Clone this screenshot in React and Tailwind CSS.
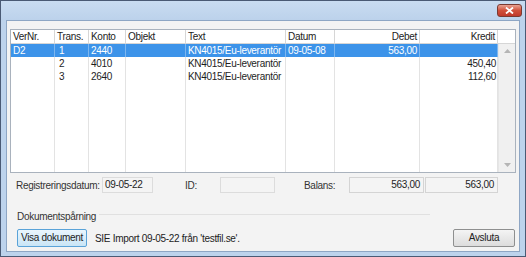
const cols = [
  { key: "ver", label: "VerNr.", w: "w-[44px]", align: "text-left" },
  { key: "trans", label: "Trans.", w: "w-[34px]", align: "text-left" },
  { key: "konto", label: "Konto", w: "w-[37px]", align: "text-left" },
  { key: "objekt", label: "Objekt", w: "w-[60px]", align: "text-left" },
  { key: "text", label: "Text", w: "w-[100px]", align: "text-left" },
  { key: "datum", label: "Datum", w: "w-[49px]", align: "text-left" },
  { key: "debet", label: "Debet", w: "w-[85px]", align: "text-right" },
  { key: "kredit", label: "Kredit", w: "w-[78px]", align: "text-right" },
];

const rows = [
  { ver: "D2", trans: "1", konto: "2440", objekt: "", text: "KN4015/Eu-leverantör", datum: "09-05-08", debet: "563,00", kredit: "" },
  { ver: "", trans: "2", konto: "4010", objekt: "", text: "KN4015/Eu-leverantör", datum: "", debet: "", kredit: "450,40" },
  { ver: "", trans: "3", konto: "2640", objekt: "", text: "KN4015/Eu-leverantör", datum: "", debet: "", kredit: "112,60" },
];

const App = () => {
  return (
    <div
      className="w-[526px] h-[257px] flex flex-col bg-[#bdd3ec] border border-[#4a5a74] text-[10px] tracking-[-0.3px] text-[#1e1e1e] overflow-hidden"
      style={{ fontFamily: '"Liberation Sans", Arial, sans-serif' }}
    >
      {/* Title bar */}
      <div className="h-[19px] flex items-start justify-end pr-[3px] pt-[3px] bg-gradient-to-b from-[#c9dcf1] to-[#bcd2eb]">
        <div className="w-[25px] h-[13px] rounded-[3px] border border-[#7a3a32] bg-gradient-to-b from-[#e8a293] via-[#d0503b] to-[#c0392b] flex items-center justify-center">
          <svg width="9" height="7" viewBox="0 0 9 7">
            <path d="M1 0.5 L8 6.5 M8 0.5 L1 6.5" stroke="white" strokeWidth="1.8" />
          </svg>
        </div>
      </div>

      {/* Client */}
      <div className="flex-1 mx-[5px] mb-[4px] bg-[#f3f3f3] border border-[#8ea6c4] flex flex-col">
        {/* List view */}
        <div className="mt-[8px] mx-[3px] h-[144px] bg-white border border-[#a9b2bd] flex flex-col">
          <div className="h-[14px] flex border-b border-[#d6d6d6] bg-white">
            {cols.map((c) => (
              <div
                key={c.key}
                className={`${c.w} ${c.align} shrink-0 px-[2px] leading-[13px] border-r border-[#d6d6d6] text-[#222]`}
              >
                {c.label}
              </div>
            ))}
            <div className="flex-1" />
          </div>
          <div className="flex-1 flex">
            <div className="relative flex flex-col">
              {/* grid lines */}
              <div className="absolute inset-0 flex pointer-events-none">
                {cols.map((c) => (
                  <div key={c.key} className={`${c.w} shrink-0 border-r border-[#e3e3e3]`} />
                ))}
              </div>
              {rows.map((r, i) => (
                <div
                  key={i}
                  className={`relative h-[13px] flex ${i === 0 ? "bg-[#3c93e9] text-white" : ""}`}
                >
                  {cols.map((c) => (
                    <div
                      key={c.key}
                      className={`${c.w} ${c.align} shrink-0 px-[2px] leading-[13px] whitespace-nowrap overflow-hidden ${
                        i === 0 ? "border-r border-[#7db6ef]" : ""
                      } ${c.key === "trans" ? "pl-[4px]" : ""}`}
                    >
                      {r[c.key]}
                    </div>
                  ))}
                </div>
              ))}
            </div>
            {/* scrollbar */}
            <div className="flex-1 bg-[#f0f0f0] border-l border-[#e6e6e6] flex flex-col items-center justify-between py-[5px]">
              <svg width="7" height="4" viewBox="0 0 7 4">
                <path d="M0 4 L3.5 0 L7 4 Z" fill="#b5b5b5" />
              </svg>
              <svg width="7" height="4" viewBox="0 0 7 4">
                <path d="M0 0 L3.5 4 L7 0 Z" fill="#b5b5b5" />
              </svg>
            </div>
          </div>
        </div>

        {/* Fields row */}
        <div className="mt-[4px] h-[16px] flex items-center">
          <span className="ml-[9px] w-[86px] whitespace-nowrap text-[#333]">Registreringsdatum:</span>
          <div className="w-[51px] h-[16px] border border-[#dcdcdc] bg-[#f4f4f4] px-[2px] leading-[14px]">09-05-22</div>
          <span className="ml-[32px] w-[35px] text-[#333]">ID:</span>
          <div className="w-[55px] h-[16px] border border-[#dcdcdc] bg-[#f4f4f4]" />
          <span className="ml-[29px] w-[45px] text-[#333]">Balans:</span>
          <div className="w-[75px] h-[16px] border border-[#d4d4d4] bg-[#f4f4f4] px-[3px] leading-[14px] text-right">563,00</div>
          <div className="ml-[1px] w-[73px] h-[16px] border border-[#d4d4d4] bg-[#f4f4f4] px-[3px] leading-[14px] text-right">563,00</div>
        </div>

        {/* Document tracking */}
        <div className="mt-[16px] flex items-center ml-[10px] mr-[89px]">
          <span className="text-[#333]">Dokumentspårning</span>
          <div className="flex-1 ml-[3px] mt-[-4px] border-t border-[#e0e0e0]" />
        </div>
        <div className="mt-[5px] flex items-center">
          <button className="ml-[10px] w-[70px] h-[18px] rounded-[2px] border border-[#5aa3d8] bg-gradient-to-b from-[#eaf6fd] to-[#c9e5f6] text-[#222] leading-[14px] tracking-[-0.3px]">
            Visa dokument
          </button>
          <span className="ml-[8px] text-[#222]">SIE Import 09-05-22 från 'testfil.se'.</span>
          <div className="flex-1" />
          <button className="mr-[4px] w-[62px] h-[18px] rounded-[2px] border border-[#8e8f8f] bg-gradient-to-b from-[#f4f4f4] to-[#dcdcdc] text-[#222] leading-[14px] tracking-[-0.3px]">
            Avsluta
          </button>
        </div>
      </div>
    </div>
  );
};

export default App;
